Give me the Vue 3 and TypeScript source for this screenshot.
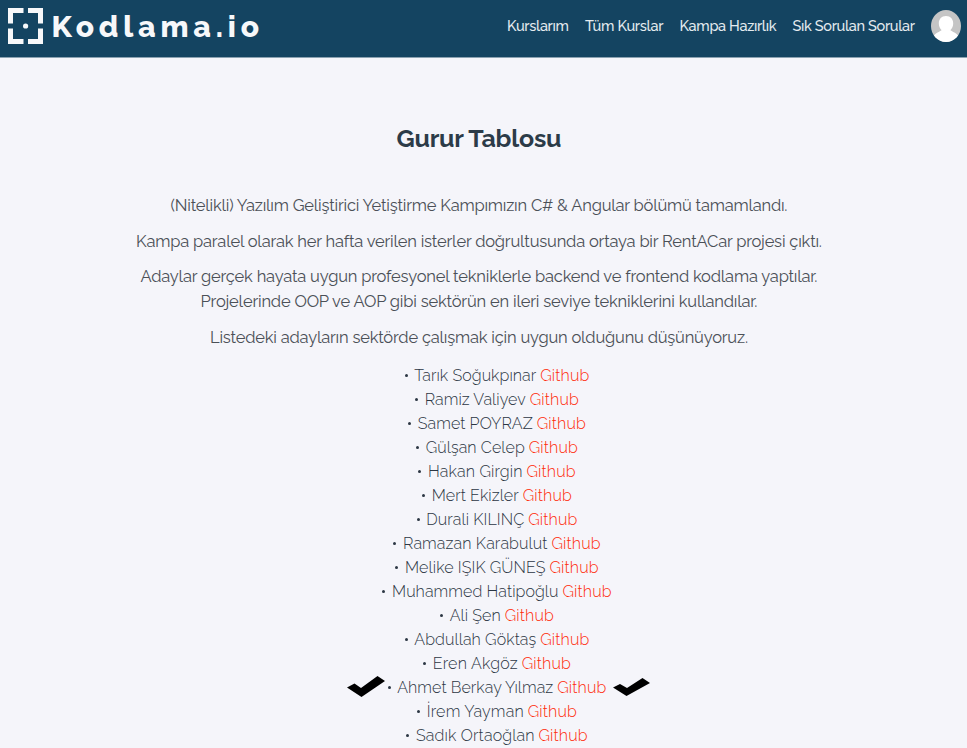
<script setup lang="ts">
import type { Directive } from 'vue'

interface NavLink { label: string; width: number }
interface Line { text: string; width: number }
interface Candidate { name: string; width: number; marked?: boolean }

const links: NavLink[] = [
  { label: 'Kurslarım', width: 62 },
  { label: 'Tüm Kurslar', width: 78.5 },
  { label: 'Kampa Hazırlık', width: 97 },
  { label: 'Sık Sorulan Sorular', width: 122.5 },
]

const paragraphs: Line[][] = [
  [{ text: '(Nitelikli) Yazılım Geliştirici Yetiştirme Kampımızın C# & Angular bölümü tamamlandı.', width: 617 }],
  [{ text: 'Kampa paralel olarak her hafta verilen isterler doğrultusunda ortaya bir RentACar projesi çıktı.', width: 686 }],
  [
    { text: 'Adaylar gerçek hayata uygun profesyonel tekniklerle backend ve frontend kodlama yaptılar.', width: 677 },
    { text: 'Projelerinde OOP ve AOP gibi sektörün en ileri seviye tekniklerini kullandılar.', width: 557 },
  ],
  [{ text: 'Listedeki adayların sektörde çalışmak için uygun olduğunu düşünüyoruz.', width: 538 }],
]

const candidates: Candidate[] = [
  { name: 'Tarık Soğukpınar', width: 122 },
  { name: 'Ramiz Valiyev', width: 101 },
  { name: 'Samet POYRAZ', width: 115 },
  { name: 'Gülşan Celep', width: 99 },
  { name: 'Hakan Girgin', width: 94.5 },
  { name: 'Mert Ekizler', width: 87 },
  { name: 'Durali KILINÇ', width: 98 },
  { name: 'Ramazan Karabulut', width: 144.5 },
  { name: 'Melike IŞIK GÜNEŞ', width: 140.5 },
  { name: 'Muhammed Hatipoğlu', width: 166.5 },
  { name: 'Ali Şen', width: 51 },
  { name: 'Abdullah Göktaş', width: 122 },
  { name: 'Eren Akgöz', width: 85 },
  { name: 'Ahmet Berkay Yılmaz', width: 156, marked: true },
  { name: 'İrem Yayman', width: 97 },
  { name: 'Sadık Ortaoğlan', width: 118.5 },
]

// Tracks the text in or out so that it spans the given number of pixels.
const vFit: Directive<HTMLElement, number> = {
  mounted(el, { value }) {
    const gaps = Array.from(el.textContent ?? '').length - 1
    const spacing = (value - el.getBoundingClientRect().width) / gaps
    el.style.letterSpacing = `${spacing}px`
    el.style.marginRight = `${-spacing}px`
  },
}
</script>

<template>
  <div class="page">
    <header class="topbar">
      <a class="brand">
        <svg class="brand-mark" width="36" height="37" viewBox="0 0 36 37">
          <path d="M2.5 15.5V2.5H15.5M20 2.5H32.5V15.5M2.5 20.5V33.5H15.5M20 33.5H32.5V20.5" fill="none" stroke="#f7f8fa" stroke-width="5" />
          <circle cx="17.6" cy="18" r="2.6" fill="#f7f8fa" />
        </svg>
        <span v-fit="207.5" class="brand-name">Kodlama.io</span>
      </a>
      <nav class="nav">
        <a v-for="link in links" :key="link.label"><span v-fit="link.width" class="fit">{{ link.label }}</span></a>
        <svg class="avatar" width="30" height="32" viewBox="0 0 30 32">
          <defs><clipPath id="avatar-clip"><ellipse cx="15" cy="16" rx="15" ry="16" /></clipPath></defs>
          <g clip-path="url(#avatar-clip)">
            <rect width="30" height="32" fill="#c5c5c5" />
            <path d="M15 6c4.500 0 7.200 3.200 7.200 7.200 0 3.400-1.200 5.200-2.700 6.800 0 1.200 4.800 2 7.500 5.500V32H3v-6.500c2.700-3.500 7.500-4.300 7.500-5.500-1.500-1.600-2.700-3.400-2.700-6.800 0-4 2.700-7.200 7.200-7.200z" fill="#fff" />
          </g>
        </svg>
      </nav>
    </header>

    <main class="content">
      <h1><span v-fit="165" class="fit">Gurur Tablosu</span></h1>
      <div class="intro">
        <p v-for="(lines, i) in paragraphs" :key="i">
          <span v-for="line in lines" :key="line.text" class="line"><span v-fit="line.width" class="fit">{{ line.text }}</span></span>
        </p>
      </div>
      <ul class="candidates">
        <li v-for="person in candidates" :key="person.name">
          <svg v-if="person.marked" class="tick tick-left" width="38" height="21" viewBox="0 0 38 21">
            <path d="M0 11.500L7.500 7.500 14 12 30.500 0 38 5 14.500 21z" />
          </svg>
          <i class="dot"></i>
          <span v-fit="person.width" class="fit">{{ person.name }}</span>
          <a><span v-fit="49" class="fit">Github</span></a>
          <svg v-if="person.marked" class="tick tick-right" width="37" height="18" viewBox="0 0 37 18">
            <path d="M0 9.500L7 6 14 10 29.500 0 37 5 13.500 18z" />
          </svg>
        </li>
      </ul>
    </main>
  </div>
</template>

<style>
body {
  margin: 0;
  background: #f5f5fa;
}
</style>

<style scoped>
.page {
  height: 748px;
  overflow: hidden;
  background: #f5f5fa;
  color: #2c3643;
  font-family: Raleway, Lato, sans-serif;
}
.topbar {
  box-sizing: border-box;
  height: 58px;
  padding: 0 6px 0 8px;
  display: flex;
  justify-content: space-between;
  background: #144461;
  border-bottom: 1px solid #8ba2b1;
}
.brand {
  display: flex;
  align-items: flex-start;
  gap: 7.5px;
  padding-top: 8px;
}
.brand-name {
  display: inline-block;
  margin-top: 1px;
  color: #f7f8fa;
  font-size: 30px;
  font-weight: 800;
  line-height: 36px;
  white-space: nowrap;
}
.nav {
  display: flex;
  align-items: center;
  gap: 16px;
  height: 52px;
  color: #e4ebef;
  font-size: 14.5px;
  font-weight: 500;
}
.nav a {
  padding-bottom: 2px;
}
.nav .avatar {
  display: block;
}
.fit {
  display: inline-block;
  white-space: nowrap;
}
.content {
  display: flex;
  flex-direction: column;
  align-items: center;
}
h1 {
  margin: 62px 9px 0 0;
  color: #2c3b48;
  font-size: 25px;
  font-weight: 700;
  line-height: 36px;
}
.intro {
  display: flex;
  flex-direction: column;
  gap: 10.7px;
  margin: 37px 9px 0 0;
  color: #4b5057;
  font-size: 16.5px;
  line-height: 25px;
}
.intro p {
  margin: 0;
}
.line {
  display: flex;
  justify-content: center;
}
.candidates {
  margin: 13.9px 0 0 27px;
  padding: 0;
  list-style: none;
  font-size: 16px;
  font-weight: 300;
  line-height: 24px;
}
.candidates li {
  position: relative;
  display: flex;
  align-items: center;
  justify-content: center;
  height: 24px;
}
.dot {
  width: 3px;
  height: 3px;
  margin-right: 6.5px;
  border-radius: 50%;
  background: #2c3643;
}
.candidates a {
  margin-left: 4px;
  color: #ff2a08;
}
.tick {
  position: absolute;
  fill: #000;
}
.tick-left {
  right: calc(50% + 112.5px);
  top: 0;
}
.tick-right {
  left: calc(50% + 116px);
  top: 2px;
}
</style>
